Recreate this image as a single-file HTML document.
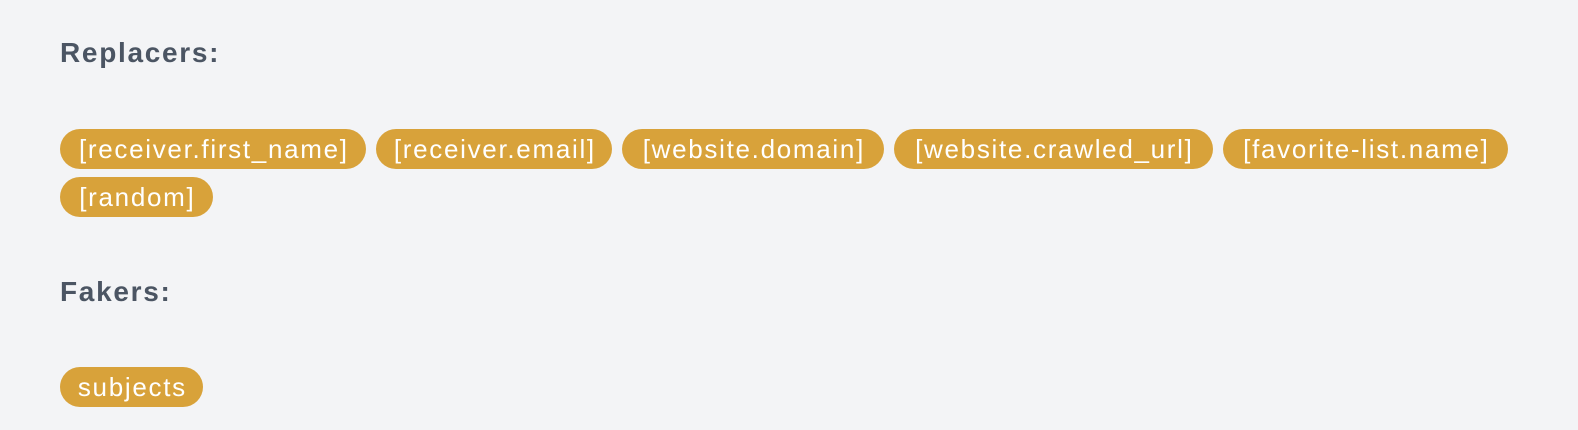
<!DOCTYPE html>
<html><head><style>
body{margin:0;background:#f3f4f6;width:1578px;height:430px;overflow:hidden;font-family:"Liberation Sans",sans-serif;position:relative}
h3{position:absolute;left:60px;margin:0;font-size:28px;font-weight:bold;color:#4b5563;line-height:30px;letter-spacing:1.7px}
.p{position:absolute;height:40px;border-radius:20px;background:#d8a23a;color:#fff;font-size:26px;line-height:40px;text-align:center;white-space:nowrap;letter-spacing:1.7px;text-indent:1.7px}
</style></head><body>
<h3 style="top:38px">Replacers:</h3>
<div class="p" style="left:60px;top:129px;width:306px">[receiver.first_name]</div>
<div class="p" style="left:376px;top:129px;width:236px">[receiver.email]</div>
<div class="p" style="left:622px;top:129px;width:262px">[website.domain]</div>
<div class="p" style="left:894px;top:129px;width:319px">[website.crawled_url]</div>
<div class="p" style="left:1223px;top:129px;width:285px">[favorite-list.name]</div>
<div class="p" style="left:60px;top:177px;width:153px">[random]</div>
<h3 style="top:277px">Fakers:</h3>
<div class="p" style="left:60px;top:367px;width:143px">subjects</div>
</body></html>
